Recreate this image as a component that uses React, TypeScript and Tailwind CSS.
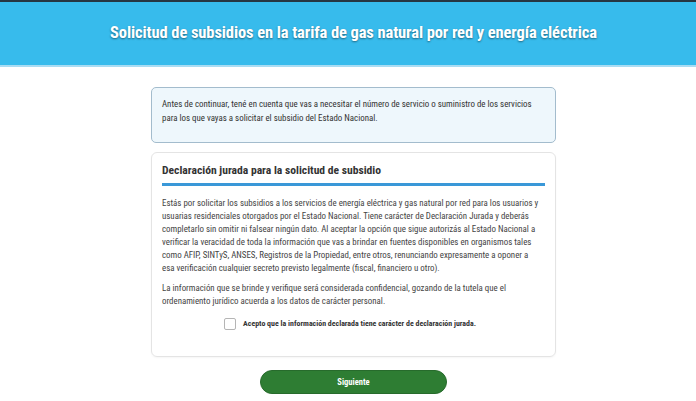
import React from "react";

const Header = () => (
  <div>
    <div className="h-[2px] bg-[#263642]" />
    <div className="h-[63px] bg-[#37bbec] flex items-center justify-center pl-[11px]">
      <h1 className="text-white text-[16.5px] font-bold tracking-[-0.1px] [text-shadow:0_1px_2px_rgba(0,0,0,0.45)]">
        Solicitud de subsidios en la tarifa de gas natural por red y energía eléctrica
      </h1>
    </div>
    <div className="h-[2px] bg-[#a9dcf3]" />
  </div>
);

const App = () => {
  return (
    <div className="min-h-[401px] bg-white font-['Roboto',sans-serif] font-stretch-condensed text-[#333]">
      <Header />
      <div className="flex flex-col items-center pl-[11px] pt-[20px]">
        <div className="w-[405px] rounded-[5px] border border-[#a3bccd] bg-[#eef7fc] pl-[10px] pr-[8px] pt-[9px] pb-[17px] text-[8.9px] leading-[14px]">
          Antes de continuar, tené en cuenta que vas a necesitar el número de servicio o suministro de los servicios
          <br />
          para los que vayas a solicitar el subsidio del Estado Nacional.
        </div>

        <div className="mt-[9px] w-[405px] rounded-[6px] border border-[#e4e4e4] px-[10px] pt-[9px] pb-[26px] shadow-[0_1px_2px_rgba(0,0,0,0.04)]">
          <h2 className="text-[11.6px] leading-[16px] font-bold text-[#333]">
            Declaración jurada para la solicitud de subsidio
          </h2>
          <div className="mt-[5px] h-[3px] bg-[#3a98d8]" />
          <p className="mt-[11px] text-[8.9px] leading-[13px] text-[#444]">
            Estás por solicitar los subsidios a los servicios de energía eléctrica y gas natural por red para los usuarios y
            <br />
            usuarias residenciales otorgados por el Estado Nacional. Tiene carácter de Declaración Jurada y deberás
            <br />
            completarlo sin omitir ni falsear ningún dato. Al aceptar la opción que sigue autorizás al Estado Nacional a
            <br />
            verificar la veracidad de toda la información que vas a brindar en fuentes disponibles en organismos tales
            <br />
            como AFIP, SINTyS, ANSES, Registros de la Propiedad, entre otros, renunciando expresamente a oponer a
            <br />
            esa verificación cualquier secreto previsto legalmente (fiscal, financiero u otro).
          </p>
          <p className="mt-[7px] text-[8.9px] leading-[13px] text-[#444]">
            La información que se brinde y verifique será considerada confidencial, gozando de la tutela que el
            <br />
            ordenamiento jurídico acuerda a los datos de carácter personal.
          </p>
          <label className="mt-[10px] flex items-center justify-center gap-[7px] pr-[7px]">
            <span className="h-[12px] w-[12px] rounded-[2px] border border-[#b5b5b5] bg-white" />
            <span className="text-[7.9px] font-bold text-[#333]">
              Acepto que la información declarada tiene carácter de declaración jurada.
            </span>
          </label>
        </div>

        <button className="mt-[13px] h-[24px] w-[187px] rounded-full border border-[#276b2c] bg-[#2e7d33] text-[8.5px] font-bold text-white">
          Siguiente
        </button>
      </div>
    </div>
  );
};

export default App;
